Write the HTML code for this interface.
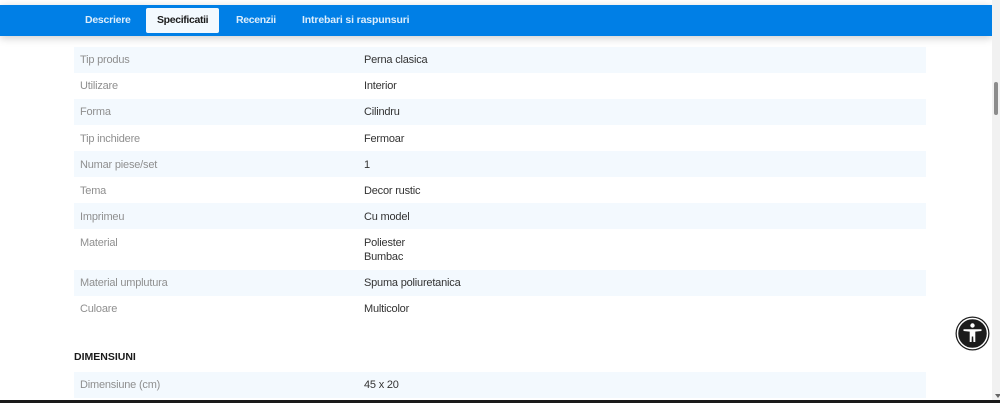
<!DOCTYPE html>
<html lang="ro">
<head>
<meta charset="utf-8">
<title>Specificatii</title>
<style>
html,body{margin:0;padding:0;width:1000px;height:402px;overflow:hidden;background:#fff;font-family:"Liberation Sans",sans-serif;}
.abs{position:absolute}
#bar{left:0;top:5px;width:992px;height:31px;background:#007fe6;box-shadow:0 2px 8px rgba(0,0,0,.2);}
#top{left:0;top:0;width:992px;height:5px;background:#fff;}
.tab{position:absolute;top:13px;font-size:10.5px;line-height:14px;font-weight:bold;letter-spacing:-.25px;color:#dcedfb;white-space:nowrap;z-index:3}
#active{left:146px;top:8px;width:73px;height:25px;background:#f3f9fe;border-radius:2px;z-index:2}
.row{position:absolute;left:74px;width:852px;}
.s{background:#f3f9fe}
.l,.v{position:absolute;font-size:11px;line-height:14px;white-space:nowrap;letter-spacing:-.2px}
.l{left:80px;color:#8f8f8f}
.v{left:364px;color:#333}
#h{left:74px;top:350px;font-size:10.5px;line-height:14px;font-weight:bold;color:#1a1a1a}
#sb{left:992px;top:0;width:8px;height:402px;background:#f1f1f1;z-index:4}
#th{left:994px;top:82px;width:4px;height:33px;background:#8c8c8c;border-radius:2px;z-index:5}
#bot{left:0;top:399.5px;width:1000px;height:3px;background:#1a1a1a;z-index:6}
#acc{left:955px;top:316px;z-index:5}
#arr{left:995px;top:394px;width:0;height:0;border-left:3px solid transparent;border-right:3px solid transparent;border-top:4px solid #666;z-index:5}
</style>
</head>
<body>
<div class="abs" id="top"></div>
<div class="abs" id="bar"></div>
<div class="abs" id="active"></div>
<div class="tab" style="left:85px">Descriere</div>
<div class="tab" style="left:157px;color:#1c1c1c;letter-spacing:-.35px">Specificatii</div>
<div class="tab" style="left:236px;letter-spacing:-.35px">Recenzii</div>
<div class="tab" style="left:302px;letter-spacing:-.15px">Intrebari si raspunsuri</div>

<div class="row s" style="top:47px;height:26px"></div>
<div class="row s" style="top:99px;height:26px"></div>
<div class="row s" style="top:151px;height:26px"></div>
<div class="row s" style="top:203px;height:26px"></div>
<div class="row s" style="top:270px;height:26px"></div>
<div class="row s" style="top:372px;height:26px"></div>

<div class="l" style="top:53px">Tip produs</div><div class="v" style="top:53px">Perna clasica</div>
<div class="l" style="top:79px">Utilizare</div><div class="v" style="top:79px">Interior</div>
<div class="l" style="top:105px">Forma</div><div class="v" style="top:105px">Cilindru</div>
<div class="l" style="top:132px">Tip inchidere</div><div class="v" style="top:132px">Fermoar</div>
<div class="l" style="top:158px">Numar piese/set</div><div class="v" style="top:158px">1</div>
<div class="l" style="top:184px">Tema</div><div class="v" style="top:184px">Decor rustic</div>
<div class="l" style="top:210px">Imprimeu</div><div class="v" style="top:210px">Cu model</div>
<div class="l" style="top:236px">Material</div><div class="v" style="top:236px">Poliester</div>
<div class="v" style="top:250px">Bumbac</div>
<div class="l" style="top:276px">Material umplutura</div><div class="v" style="top:276px">Spuma poliuretanica</div>
<div class="l" style="top:302px">Culoare</div><div class="v" style="top:302px">Multicolor</div>
<div class="abs" id="h">DIMENSIUNI</div>
<div class="l" style="top:378px">Dimensiune (cm)</div><div class="v" style="top:378px">45 x 20</div>

<svg class="abs" id="acc" width="35" height="35" viewBox="0 0 35 35">
<circle cx="17.5" cy="17.5" r="17" fill="#1c1c1c"/>
<circle cx="17.5" cy="17.5" r="15" fill="#1c1c1c" stroke="#fff" stroke-width="1.5"/>
<circle cx="17.5" cy="9.5" r="2.2" fill="#fff"/>
<path d="M8.5 13.2 L26.5 13.2 L26.5 15 L20.3 15.6 L20.3 26 L18.4 26 L18.2 20.5 L16.8 20.5 L16.6 26 L14.7 26 L14.7 15.6 L8.5 15 Z" fill="#fff"/>
</svg>
<div class="abs" id="sb"></div>
<div class="abs" id="th"></div>
<div class="abs" id="arr"></div>
<div class="abs" id="bot"></div>
</body>
</html>
